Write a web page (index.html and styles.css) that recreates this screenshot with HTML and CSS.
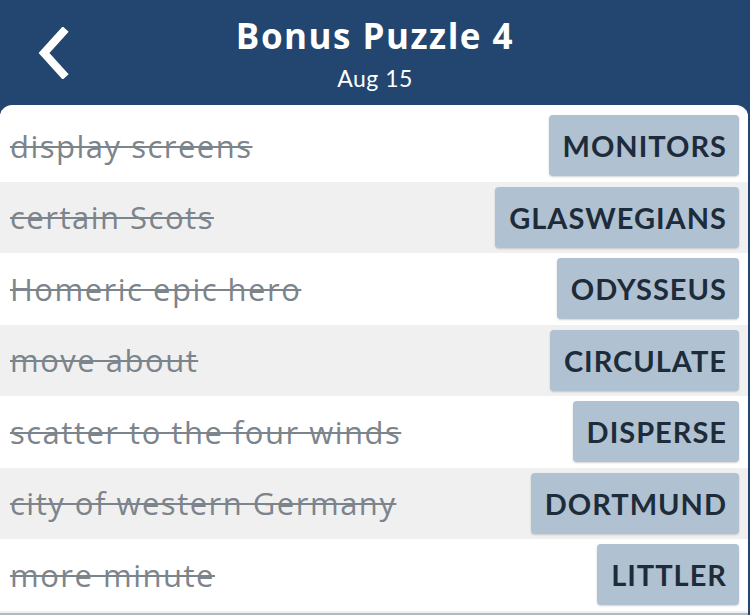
FILE: index.html
```html
<!DOCTYPE html>
<html>
<head>
<meta charset="utf-8">
<link rel="stylesheet" href="styles.css">
</head>
<body>
<header class="topbar">
  <svg class="back" width="34" height="52" viewBox="0 0 34 52"><path d="M27 5 L8 26 L27 47" fill="none" stroke="#fff" stroke-width="8" stroke-linecap="square" stroke-linejoin="miter"/></svg>
  <div class="titles">
    <div class="title">Bonus Puzzle 4</div>
    <div class="subtitle">Aug 15</div>
  </div>
</header>
<main class="card">
  <div class="row"><span class="clue">display screens</span><span class="answer">MONITORS</span></div>
  <div class="row alt"><span class="clue">certain Scots</span><span class="answer">GLASWEGIANS</span></div>
  <div class="row"><span class="clue">Homeric epic hero</span><span class="answer">ODYSSEUS</span></div>
  <div class="row alt"><span class="clue">move about</span><span class="answer">CIRCULATE</span></div>
  <div class="row"><span class="clue">scatter to the four winds</span><span class="answer">DISPERSE</span></div>
  <div class="row alt"><span class="clue">city of western Germany</span><span class="answer">DORTMUND</span></div>
  <div class="row"><span class="clue">more minute</span><span class="answer">LITTLER</span></div>
  <div class="row alt tail"><div class="tailbar"></div></div>
</main>
</body>
</html>
```
FILE: styles.css
```css
html, body {
  margin: 0;
  padding: 0;
  background: #22466f;
  height: 615px;
  overflow: hidden;
}
body {
  font-family: "Lato", "Open Sans", sans-serif;
}
.topbar {
  height: 105px;
  position: relative;
  display: flex;
  justify-content: center;
  color: #fff;
}
.back {
  position: absolute;
  left: 36px;
  top: 27px;
}
.titles {
  display: flex;
  flex-direction: column;
  align-items: center;
  padding-top: 13px;
}
.title {
  font-family: "Open Sans", sans-serif;
  font-size: 35px;
  font-weight: 700;
  letter-spacing: 1.5px;
  line-height: 46px;
}
.subtitle {
  font-size: 23px;
  line-height: 28px;
  margin-top: 5px;
  letter-spacing: 0.5px;
}
.card {
  background: #fff;
  border-radius: 12px 12px 0 0;
  margin-right: 2px;
  padding-top: 5px;
  height: 510px;
  overflow: hidden;
}
.row {
  height: 71.5px;
  display: flex;
  align-items: center;
  justify-content: space-between;
  padding: 0 9px 0 10px;
  background: #fff;
}
.row.alt {
  background: #f0f0f0;
}
.clue {
  font-family: "Open Sans", sans-serif;
  font-size: 31px;
  letter-spacing: 1.5px;
  color: #7c848c;
  text-decoration: line-through;
  text-decoration-thickness: 2px;
  white-space: nowrap;
}
.answer {
  background: #b0c2d1;
  color: #1d2b3a;
  font-size: 29px;
  font-weight: 700;
  letter-spacing: 1px;
  height: 61px;
  display: flex;
  align-items: center;
  padding: 0 12px 0 14px;
  border-radius: 4px;
  box-shadow: 0 1px 2px rgba(0, 0, 0, 0.18);
}
.tail {
  align-items: flex-start;
  padding: 2px 0 0 0;
}
.tailbar {
  height: 3px;
  width: 100%;
  background: #aabccc;
}
```
